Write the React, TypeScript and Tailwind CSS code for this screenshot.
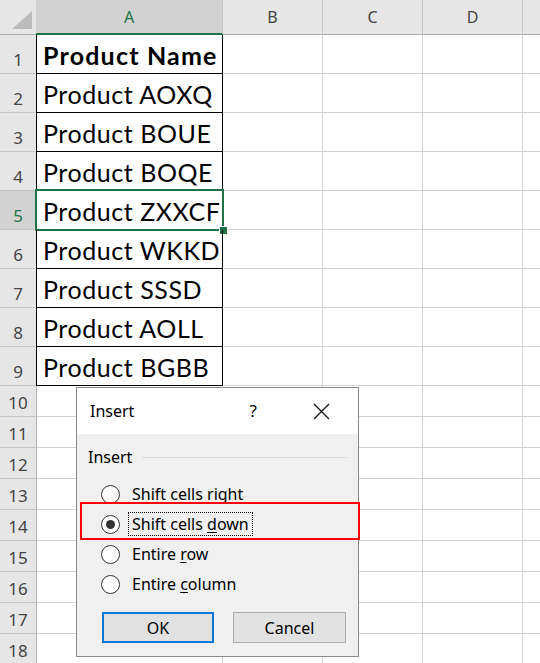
const PRODUCTS = [
  'Product AOXQ',
  'Product BOUE',
  'Product BOQE',
  'Product ZXXCF',
  'Product WKKD',
  'Product SSSD',
  'Product AOLL',
  'Product BGBB',
]

const UI_FONT = "font-['Noto_Sans','Open_Sans',sans-serif]"
const CELL_FONT = "font-['Lato','Noto_Sans',sans-serif]"

function RowHeader({ n, active }: { n: number; active?: boolean }) {
  return (
    <div
      className={`w-[36px] shrink-0 flex items-end justify-center pb-[5px] border-b border-[#c4c4c4] text-[17px] leading-none ${
        active ? 'bg-[#d2d2d2] text-[#217346]' : 'bg-[#e6e6e6] text-[#444]'
      }`}
    >
      {n}
    </div>
  )
}

function EmptyCells() {
  return (
    <>
      <div className="w-[100px] shrink-0 border-r border-b border-[#d4d4d4]" />
      <div className="w-[100px] shrink-0 border-r border-b border-[#d4d4d4]" />
      <div className="w-[100px] shrink-0 border-r border-b border-[#d4d4d4]" />
      <div className="flex-1 border-b border-[#d4d4d4]" />
    </>
  )
}

function DataRow({ n, text, bold, selected }: { n: number; text: string; bold?: boolean; selected?: boolean }) {
  return (
    <div className="flex h-[39px]">
      <RowHeader n={n} active={selected} />
      <div
        className={`relative w-[187px] shrink-0 flex items-center pl-[6px] pt-[3px] border-l border-r border-b border-black text-[25px] text-black whitespace-nowrap ${CELL_FONT} ${
          bold ? 'font-bold tracking-[1.2px]' : 'tracking-[0.55px]'
        }`}
      >
        {text}
        {selected && (
          <>
            <div className="absolute -left-[2px] -top-[2px] -right-[2px] -bottom-[2px] border-2 border-[#217346]" />
            <div className="absolute -right-[6px] -bottom-[6px] w-[9px] h-[9px] bg-[#217346] border border-white" />
          </>
        )}
      </div>
      <EmptyCells />
    </div>
  )
}

function BlankRow({ n }: { n: number }) {
  return (
    <div className="flex h-[31px]">
      <RowHeader n={n} />
      <div className="w-[187px] shrink-0 border-l border-l-[#b4b4b4] border-r border-b border-[#d4d4d4]" />
      <EmptyCells />
    </div>
  )
}

function ColumnHeaders() {
  return (
    <div className={`flex h-[35px] text-[16px] ${UI_FONT}`}>
      <div className="w-[36px] shrink-0 bg-[#e6e6e6] border-b border-[#ababab] flex items-end justify-end pr-[4px] pb-[5px]">
        <svg width="20" height="18" viewBox="0 0 20 18">
          <polygon points="20,0 20,18 0,18" fill="#bcbcbc" />
        </svg>
      </div>
      <div className="w-[187px] shrink-0 bg-[#d2d2d2] border-b-2 border-[#217346] border-r border-r-[#c6c6c6] flex items-center justify-center text-[#217346]">
        A
      </div>
      {['B', 'C', 'D'].map((c) => (
        <div
          key={c}
          className="w-[100px] shrink-0 bg-[#e6e6e6] border-b border-[#ababab] border-r border-r-[#c6c6c6] flex items-center justify-center text-[#444]"
        >
          {c}
        </div>
      ))}
      <div className="flex-1 bg-[#e6e6e6] border-b border-[#ababab]" />
    </div>
  )
}

function Radio({ label, checked }: { label: [string, string, string]; checked?: boolean }) {
  return (
    <div className="flex items-center h-[30px] pl-[24px]">
      <span className="w-[19px] h-[19px] rounded-full border border-[#333] bg-white flex items-center justify-center shrink-0">
        {checked && <span className="w-[9px] h-[9px] rounded-full bg-[#333]" />}
      </span>
      <span
        className={`ml-[8px] px-[3px] leading-[22px] border ${
          checked ? 'border-dotted border-black' : 'border-transparent'
        }`}
      >
        {label[0]}
        <span className="underline underline-offset-2">{label[1]}</span>
        {label[2]}
      </span>
    </div>
  )
}

function InsertDialog() {
  return (
    <div className={`absolute left-[76px] top-[387px] w-[283px] h-[270px] border border-[#8a8a8a] bg-[#f0f0f0] text-[16px] text-black ${UI_FONT}`}>
      {/* title bar */}
      <div className="h-[46px] bg-white flex items-center pl-[13px] pr-[28px]">
        <span className="flex-1">Insert</span>
        <span className="text-[17px]">?</span>
        <svg className="ml-[56px]" width="17" height="17" viewBox="0 0 17 17">
          <path d="M1 1L16 16M16 1L1 16" stroke="#111" strokeWidth="1.3" fill="none" />
        </svg>
      </div>

      <div className="pt-[12px]">
        <div className="flex items-center pl-[11px] pr-[11px] leading-[22px]">
          <span>Insert</span>
          <span className="flex-1 ml-[10px] h-px bg-[#dcdcdc]" />
        </div>

        <div className="mt-[11px]">
          <Radio label={['Shift cells r', 'i', 'ght']} />
          <Radio label={['Shift cells ', 'd', 'own']} checked />
          <Radio label={['Entire ', 'r', 'ow']} />
          <Radio label={['Entire ', 'c', 'olumn']} />
        </div>

        <div className="flex gap-[19px] pl-[25px] mt-[13px]">
          <button className="w-[112px] h-[31px] bg-[#e1e1e1] border-2 border-[#0078d7]">OK</button>
          <button className="w-[113px] h-[31px] bg-[#e1e1e1] border border-[#adadad]">Cancel</button>
        </div>
      </div>

      {/* annotation */}
      <div className="absolute left-[3px] top-[114px] w-[280px] h-[38px] border-2 border-[#ff0000]" />
    </div>
  )
}

export default function App() {
  return (
    <div className={`relative w-[540px] h-[663px] overflow-hidden bg-white ${UI_FONT}`}>
      <ColumnHeaders />
      <DataRow n={1} text="Product Name" bold />
      {PRODUCTS.map((p, i) => (
        <DataRow key={p} n={i + 2} text={p} selected={i + 2 === 5} />
      ))}
      {[10, 11, 12, 13, 14, 15, 16, 17, 18].map((n) => (
        <BlankRow key={n} n={n} />
      ))}
      <InsertDialog />
    </div>
  )
}
